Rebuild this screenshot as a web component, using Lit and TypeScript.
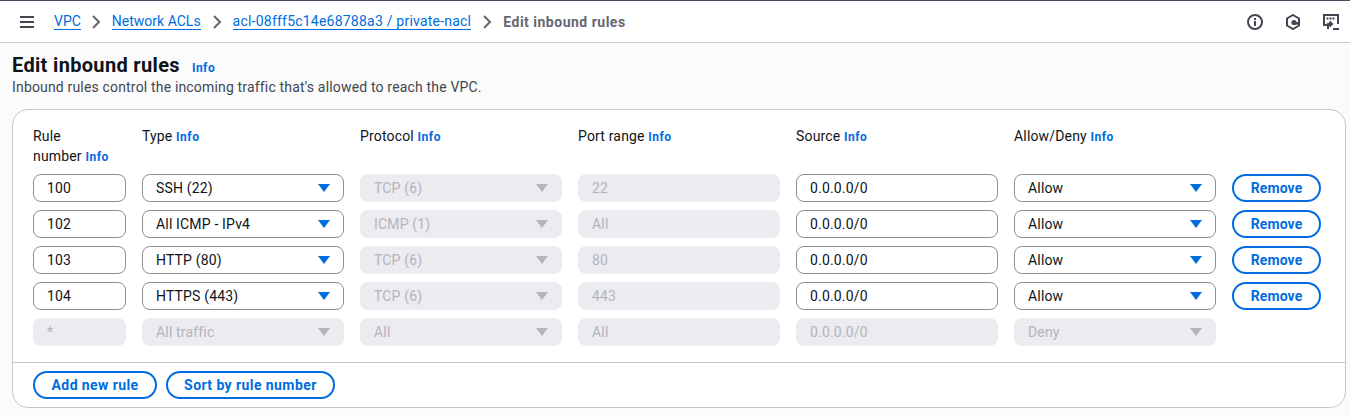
import { css, html, LitElement, svg } from "lit";
import { customElement } from "lit/decorators.js";

interface Rule {
  num: string;
  type: string;
  protocol: string;
  port: string;
}

const rules: Rule[] = [
  { num: "100", type: "SSH (22)", protocol: "TCP (6)", port: "22" },
  { num: "102", type: "All ICMP - IPv4", protocol: "ICMP (1)", port: "All" },
  { num: "103", type: "HTTP (80)", protocol: "TCP (6)", port: "80" },
  { num: "104", type: "HTTPS (443)", protocol: "TCP (6)", port: "443" },
];

const caret = svg`<svg class="caret" viewBox="0 0 12 8" width="12" height="8"><path d="M0 0h12L6 8z" fill="currentColor"></path></svg>`;

@customElement("app-root")
class AppRoot extends LitElement {
  static styles = css`
    :host {
      display: block;
      height: 417px;
      overflow: hidden;
      background: #fbfbfb;
      color: #0f141a;
      font-family: Roboto, "Liberation Sans", sans-serif;
      font-size: 14px;
      letter-spacing: 0.17px;
    }

    .topbar {
      display: flex;
      align-items: center;
      box-sizing: border-box;
      height: 43px;
      padding: 0 11px 0 19px;
      background: #fff;
      border-top: 1px solid #414d5c;
      border-bottom: 1px solid #c6c6cd;
    }

    .burger {
      margin-right: 19px;
    }

    .crumbs {
      display: flex;
      align-items: center;
      flex: 1;
      letter-spacing: 0;
    }

    .crumbs a {
      color: #006ce0;
      line-height: 16px;
      border-bottom: 1px solid #006ce0;
    }

    .crumbs a.first {
      margin-right: -1px;
    }

    .crumbs a.id {
      letter-spacing: 0.22px;
    }

    .sep {
      margin: 0 11px;
      color: #656871;
    }

    .current {
      color: #656871;
      font-weight: 700;
      letter-spacing: 0.5px;
    }

    .tools {
      display: flex;
      align-items: center;
      gap: 22px;
      color: #424650;
    }

    .heading {
      padding: 9px 12px 0;
    }

    .heading h1 {
      display: flex;
      align-items: baseline;
      gap: 12px;
      height: 26px;
      margin: 0;
      font-size: 20px;
      line-height: 26px;
      font-weight: 700;
      letter-spacing: 0.33px;
    }

    .heading p {
      margin: 0;
      line-height: 18px;
      color: #424650;
    }

    .info {
      color: #006ce0;
      font-size: 12px;
      font-weight: 700;
      letter-spacing: 0.5px;
    }

    .card {
      margin: 13px 4px 0 12px;
      box-sizing: border-box;
      height: 299px;
      background: #fff;
      border: 1px solid #c6c6cd;
      border-radius: 16px;
    }

    .grid {
      display: grid;
      grid-template-columns: 93px repeat(5, 202px) 89px;
      gap: 8px 16px;
      padding: 16px 20px 0;
      height: 253px;
      box-sizing: border-box;
      align-content: start;
      border-bottom: 1px solid #c6c6cd;
    }

    .head {
      height: 40px;
      line-height: 20px;
    }

    .field {
      display: flex;
      align-items: center;
      justify-content: space-between;
      box-sizing: border-box;
      height: 28px;
      padding: 0 13px;
      background: #fff;
      border: 1px solid #8c8c94;
      border-radius: 8px;
    }

    .field.off {
      background: #ebebf0;
      border-color: #ebebf0;
      color: #b4b4bb;
    }

    .caret {
      color: #006ce0;
    }

    .off .caret {
      color: #b4b4bb;
    }

    .btn {
      display: inline-flex;
      align-items: center;
      justify-content: center;
      box-sizing: border-box;
      height: 28px;
      padding: 0 16px;
      background: #fff;
      border: 2px solid #006ce0;
      border-radius: 20px;
      color: #006ce0;
      font-weight: 700;
      letter-spacing: 0.1px;
    }

    .foot {
      display: flex;
      gap: 9px;
      padding: 8px 20px;
    }

    .foot .btn {
      letter-spacing: 0.42px;
    }

    .foot .btn:first-child {
      padding: 0 16.5px;
    }
  `;

  private label(text: unknown) {
    return html`<div class="head">${text} <a class="info">Info</a></div>`;
  }

  private select(text: string, off = false) {
    return html`<div class="field ${off ? "off" : ""}"><span>${text}</span>${caret}</div>`;
  }

  private input(text: string, off = false) {
    return html`<div class="field ${off ? "off" : ""}">${text}</div>`;
  }

  render() {
    return html`
      <div class="topbar">
        <svg class="burger" width="16" height="16" viewBox="0 0 16 16" fill="none" stroke="#424650" stroke-width="2">
          <path d="M1 3h14M1 8h14M1 13h14"></path>
        </svg>
        <nav class="crumbs">
          <a class="first">VPC</a>
          ${this.chevron()}
          <a>Network ACLs</a>
          ${this.chevron()}
          <a class="id">acl-08fff5c14e68788a3 / private-nacl</a>
          ${this.chevron()}
          <span class="current">Edit inbound rules</span>
        </nav>
        <div class="tools">
          <svg width="16" height="16" viewBox="0 0 16 16" fill="none" stroke="currentColor" stroke-width="2">
            <circle cx="8" cy="8" r="7"></circle>
            <path d="M8 7v5M8 4v2"></path>
          </svg>
          <svg width="16" height="16" viewBox="0 0 16 16" fill="none" stroke="currentColor" stroke-width="2">
            <path d="M8 1l6 3.5v7L8 15l-6-3.5v-7z"></path>
            <circle cx="9" cy="8.5" r="2.6" fill="currentColor" stroke="none"></circle>
            <path d="M9 9l4 .5" stroke-width="2.5"></path>
          </svg>
          <svg width="16" height="16" viewBox="0 0 16 16" fill="none" stroke="currentColor" stroke-width="2">
            <path d="M5 11H1V1h14v9"></path>
            <path d="M3.5 4.5h8" stroke-dasharray="2 1"></path>
            <path d="M4 10h5M6.5 7.5L9 10l-2.5 2.5M5 10v5M10 15h6"></path>
          </svg>
        </div>
      </div>
      <div class="heading">
        <h1>Edit inbound rules <a class="info">Info</a></h1>
        <p>Inbound rules control the incoming traffic that's allowed to reach the VPC.</p>
      </div>
      <div class="card">
        <div class="grid">
          ${this.label(html`Rule<br />number`)} ${this.label("Type")} ${this.label("Protocol")}
          ${this.label("Port range")} ${this.label("Source")} ${this.label("Allow/Deny")}
          <div></div>
          ${rules.map(
            (r) => html`
              ${this.input(r.num)} ${this.select(r.type)} ${this.select(r.protocol, true)}
              ${this.input(r.port, true)} ${this.input("0.0.0.0/0")} ${this.select("Allow")}
              <div class="btn">Remove</div>
            `
          )}
          ${this.input("*", true)} ${this.select("All traffic", true)} ${this.select("All", true)}
          ${this.input("All", true)} ${this.input("0.0.0.0/0", true)} ${this.select("Deny", true)}
        </div>
        <div class="foot">
          <div class="btn">Add new rule</div>
          <div class="btn">Sort by rule number</div>
        </div>
      </div>
    `;
  }

  private chevron() {
    return html`<svg class="sep" width="10" height="14" viewBox="0 0 10 14" fill="none" stroke="currentColor" stroke-width="2">
      <path d="M2 1l6 6-6 6"></path>
    </svg>`;
  }
}

declare global {
  interface HTMLElementTagNameMap {
    "app-root": AppRoot;
  }
}
